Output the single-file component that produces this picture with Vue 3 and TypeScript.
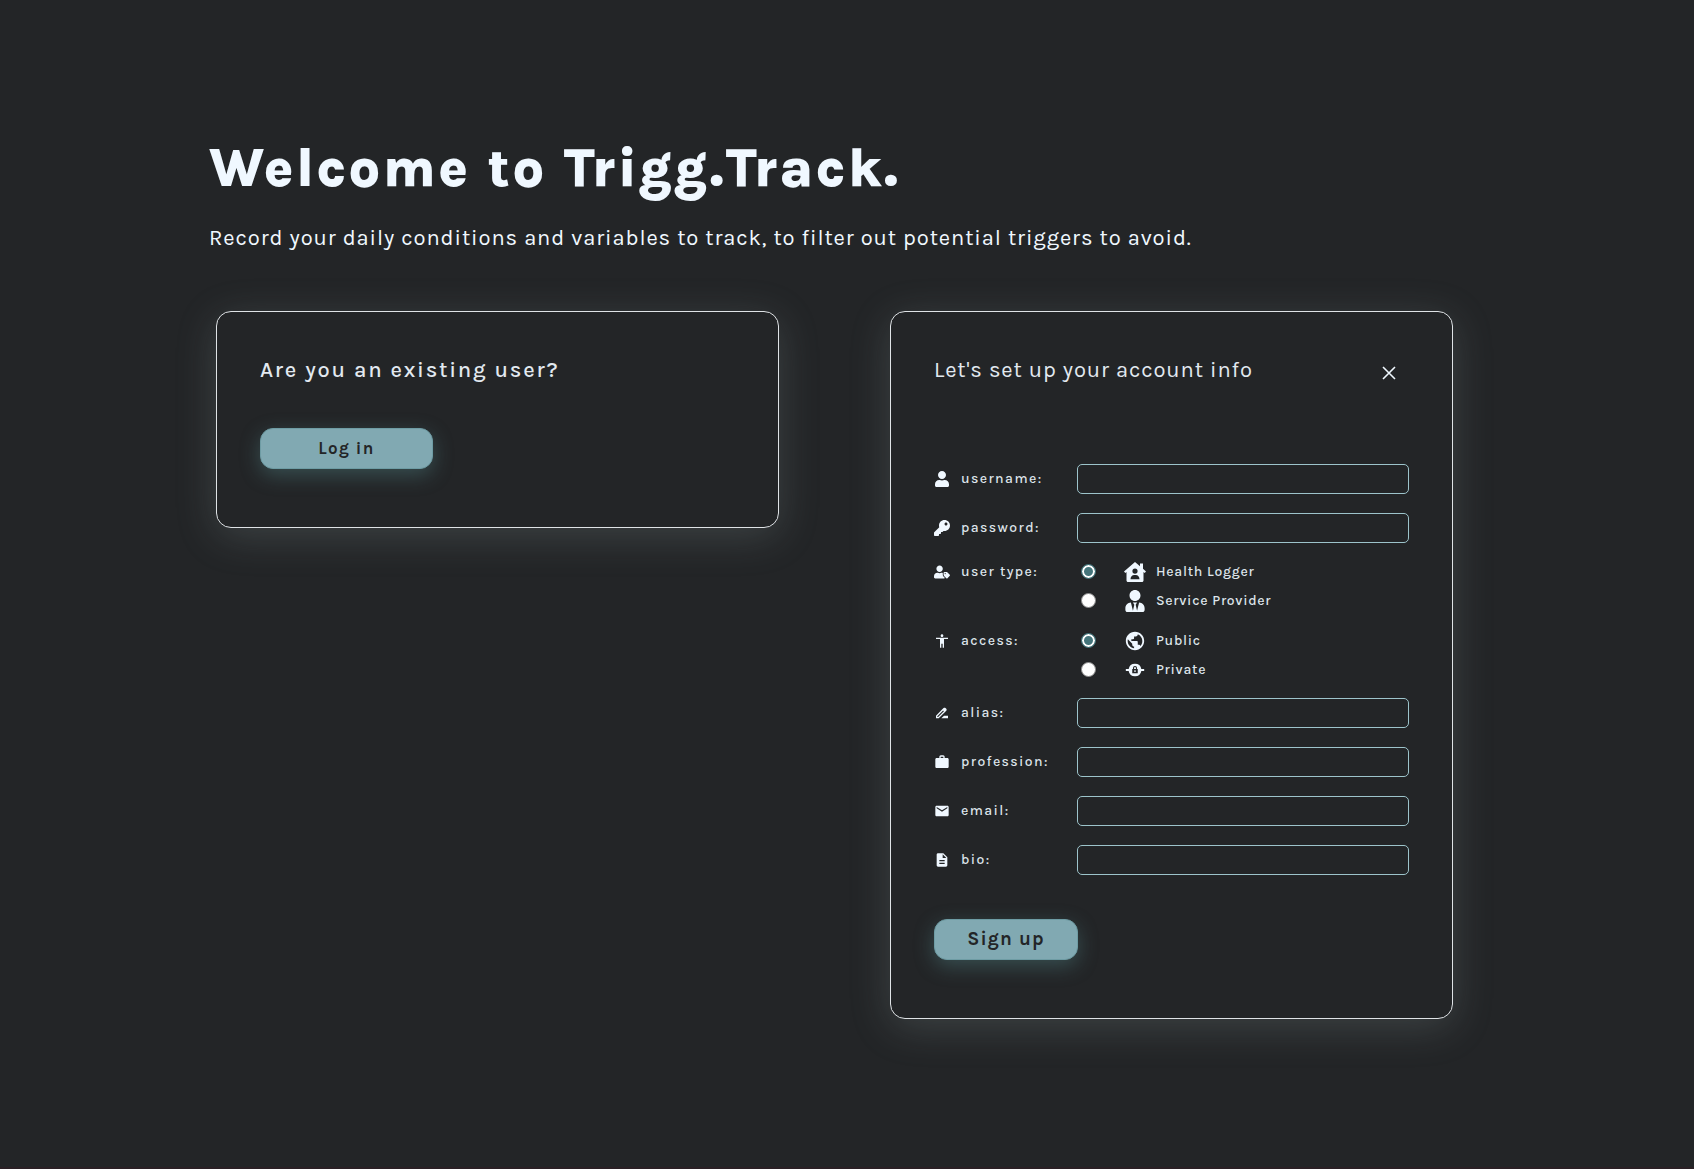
<script setup lang="ts">
import { ref } from 'vue'

interface Icon {
  box: string
  d: string
}

interface TextField {
  id: string
  label: string
  type: string
  icon: Icon
}

interface Choice {
  value: string
  label: string
  icon: Icon
}

interface ChoiceField {
  name: string
  label: string
  icon: Icon
  choices: Choice[]
}

const icons: Record<string, Icon> = {
  user: {
    box: '0 0 448 512',
    d: 'M224 256c70.7 0 128-57.3 128-128S294.7 0 224 0 96 57.3 96 128s57.3 128 128 128zm89.6 32h-16.7c-22.2 10.2-46.9 16-72.9 16s-50.6-5.8-72.9-16h-16.7C60.2 288 0 348.2 0 422.4V464c0 26.5 21.5 48 48 48h352c26.5 0 48-21.5 48-48v-41.6c0-74.2-60.2-134.4-134.4-134.4z',
  },
  key: {
    box: '0 0 512 512',
    d: 'M512 176.001C512 273.203 433.202 352 336 352c-11.22 0-22.19-1.062-32.827-3.069l-24.012 27.014A23.999 23.999 0 0 1 261.223 384H224v40c0 13.255-10.745 24-24 24h-40v40c0 13.255-10.745 24-24 24H24c-13.255 0-24-10.745-24-24v-78.059c0-6.365 2.529-12.47 7.029-16.971l161.802-161.802C163.108 213.814 160 195.271 160 176 160 78.798 238.797.001 335.999 0 433.488-.001 512 78.511 512 176.001zM336 128c0 26.51 21.49 48 48 48s48-21.49 48-48-21.49-48-48-48-48 21.49-48 48z',
  },
  userTag: {
    box: '0 0 640 512',
    d: 'M630.6 364.9l-90.3-90.2c-12-12-28.3-18.7-45.3-18.7h-79.3c-17.7 0-32 14.3-32 32v79.2c0 17 6.7 33.2 18.7 45.2l90.3 90.2c12.5 12.5 32.8 12.5 45.3 0l92.5-92.5c12.6-12.5 12.6-32.7.1-45.2zm-182.8-21c-13.3 0-24-10.7-24-24s10.7-24 24-24 24 10.7 24 24c0 13.2-10.7 24-24 24zm-223.8-88c70.7 0 128-57.3 128-128C352 57.3 294.7 0 224 0S96 57.3 96 128c0 70.6 57.3 127.9 128 127.9zm127.8 111.2V294c-12.2-3.6-24.9-6.2-38.2-6.2h-16.7c-22.2 10.2-46.9 16-72.9 16s-50.6-5.8-72.9-16h-16.7c-74.2 0-134.4 60.2-134.4 134.4V464c0 26.5 21.5 48 48 48h352c15.5 0 29.1-7.5 37.9-18.9l-58-58c-18.1-18.1-28.1-42.2-28.1-67.9z',
  },
  access: {
    box: '0 0 24 24',
    d: 'M12 2c1.1 0 2 .9 2 2s-.9 2-2 2-2-.9-2-2 .9-2 2-2zm9 7h-6v13h-2v-6h-2v6H9V9H3V7h18v2z',
  },
  pen: {
    box: '0 0 24 24',
    d: 'M18.41 5.8 17.2 4.59c-.78-.78-2.05-.78-2.83 0l-2.68 2.68L3 15.96V20h4.04l8.74-8.74 2.63-2.63c.79-.78.79-2.05 0-2.83zM6.21 18H5v-1.21l8.66-8.66 1.21 1.21L6.21 18zM11 20l4-4h6v4H11z',
  },
  briefcase: {
    box: '0 0 24 24',
    d: 'M20 6h-4V4.500C16 3.100 15.100 2 13.700 2h-3.400C8.900 2 8 3.100 8 4.500V6H4c-1.100 0-2 .9-2 2v11c0 1.100.9 2 2 2h16c1.100 0 2-.9 2-2V8c0-1.100-.9-2-2-2zm-6 0h-4V4h4v2z',
  },
  mail: {
    box: '0 0 24 24',
    d: 'M20 4H4c-1.1 0-1.99.9-1.99 2L2 18c0 1.1.9 2 2 2h16c1.1 0 2-.9 2-2V6c0-1.1-.9-2-2-2zm0 4l-8 5-8-5V6l8 5 8-5v2z',
  },
  doc: {
    box: '0 0 24 24',
    d: 'M14 2H6c-1.1 0-1.99.9-1.99 2L4 20c0 1.1.89 2 1.99 2H18c1.1 0 2-.9 2-2V8l-6-6zm2 16H8v-2h8v2zm0-4H8v-2h8v2zm-3-5V3.5L18.5 9H13z',
  },
  house: {
    box: '0 0 22 22',
    d: 'M11 1 0 10.400l1.300 1.500L2.500 11v8.500c0 .8.700 1.500 1.500 1.500h14c.8 0 1.500-.7 1.500-1.500V11l1.200.9 1.300-1.500-3-2.600V2.500h-3v2.700zM11 7.500a2.600 2.600 0 1 1 0 5.200 2.600 2.600 0 0 1 0-5.200zM6.500 18.200c0-2.500 1.600-4.200 3.700-4.200h1.600c2.100 0 3.700 1.700 3.700 4.200z',
  },
  tie: {
    box: '0 0 448 512',
    d: 'M224 256c70.7 0 128-57.3 128-128S294.7 0 224 0 96 57.3 96 128s57.3 128 128 128zm95.8 32.6L272 480l-32-136 32-56h-96l32 56-32 136-47.8-191.4C56.9 292 0 350.3 0 422.4V464c0 26.5 21.5 48 48 48h352c26.5 0 48-21.5 48-48v-41.6c0-72.1-56.9-130.4-128.2-133.8z',
  },
  globe: {
    box: '0 0 24 24',
    d: 'M12 2C6.48 2 2 6.48 2 12s4.48 10 10 10 10-4.48 10-10S17.52 2 12 2zm-1 17.93c-3.95-.49-7-3.85-7-7.93 0-.62.08-1.21.21-1.79L9 15v1c0 1.1.9 2 2 2v1.93zm6.9-2.54c-.26-.81-1-1.39-1.9-1.39h-1v-3c0-.55-.45-1-1-1H8v-2h2c.55 0 1-.45 1-1V7h2c1.1 0 2-.9 2-2v-.41c2.93 1.19 5 4.06 5 7.41 0 2.08-.8 3.97-2.1 5.39z',
  },
  lock: {
    box: '0 0 24 24',
    d: 'M2 11h3.100a7 7 0 0 1 13.800 0H22v2h-3.100a7 7 0 0 1-13.800 0H2zM9 11v4.500h6V11h-.8V9.800a2.200 2.200 0 0 0-4.400 0V11zM11 11V9.800a1 1 0 0 1 2 0V11zM11.300 12.300h1.400v2h-1.400z',
  },
}

const credentials: TextField[] = [
  { id: 'username', label: 'username:', type: 'text', icon: icons.user },
  { id: 'password', label: 'password:', type: 'password', icon: icons.key },
]

const choiceFields: ChoiceField[] = [
  {
    name: 'userType',
    label: 'user type:',
    icon: icons.userTag,
    choices: [
      { value: 'logger', label: 'Health Logger', icon: icons.house },
      { value: 'provider', label: 'Service Provider', icon: icons.tie },
    ],
  },
  {
    name: 'access',
    label: 'access:',
    icon: icons.access,
    choices: [
      { value: 'public', label: 'Public', icon: icons.globe },
      { value: 'private', label: 'Private', icon: icons.lock },
    ],
  },
]

const profile: TextField[] = [
  { id: 'alias', label: 'alias:', type: 'text', icon: icons.pen },
  { id: 'profession', label: 'profession:', type: 'text', icon: icons.briefcase },
  { id: 'email', label: 'email:', type: 'email', icon: icons.mail },
  { id: 'bio', label: 'bio:', type: 'text', icon: icons.doc },
]

const values = ref<Record<string, string>>({
  username: '',
  password: '',
  alias: '',
  profession: '',
  email: '',
  bio: '',
  userType: 'logger',
  access: 'public',
})
</script>

<template>
  <main class="page">
    <header>
      <h1 class="title">Welcome to Trigg.Track.</h1>
      <p class="lead">
        Record your daily conditions and variables to track, to filter out potential triggers to avoid.
      </p>
    </header>

    <div class="cards">
      <section class="card">
        <h2 class="heading wide">Are you an existing user?</h2>
        <button type="button" class="btn login">Log in</button>
      </section>

      <section class="card">
        <div class="card-head">
          <h2 class="heading">Let's set up your account info</h2>
          <button type="button" class="close" aria-label="Close">
            <svg viewBox="0 0 14 14" width="14" height="14">
              <path d="M1 1l12 12M13 1L1 13" fill="none" stroke="currentColor" stroke-width="1.6" />
            </svg>
          </button>
        </div>

        <form @submit.prevent>
          <div class="fields">
            <div v-for="f in credentials" :key="f.id" class="row">
              <label class="label" :for="f.id">
                <svg class="icon" :viewBox="f.icon.box"><path :d="f.icon.d" fill-rule="evenodd" /></svg>
                {{ f.label }}
              </label>
              <input :id="f.id" v-model="values[f.id]" class="input" :type="f.type" />
            </div>
          </div>

          <div class="groups">
            <div
              v-for="g in choiceFields"
              :key="g.name"
              class="row group"
              role="radiogroup"
              :aria-labelledby="g.name"
            >
              <span :id="g.name" class="label group-label">
                <svg class="icon" :viewBox="g.icon.box"><path :d="g.icon.d" fill-rule="evenodd" /></svg>
                {{ g.label }}
              </span>
              <div class="choices">
                <label v-for="c in g.choices" :key="c.value" class="choice">
                  <input v-model="values[g.name]" class="radio" type="radio" :name="g.name" :value="c.value" />
                  <svg class="choice-icon" :viewBox="c.icon.box">
                    <path :d="c.icon.d" fill-rule="evenodd" />
                  </svg>
                  {{ c.label }}
                </label>
              </div>
            </div>
          </div>

          <div class="fields">
            <div v-for="f in profile" :key="f.id" class="row">
              <label class="label" :for="f.id">
                <svg class="icon" :viewBox="f.icon.box"><path :d="f.icon.d" fill-rule="evenodd" /></svg>
                {{ f.label }}
              </label>
              <input :id="f.id" v-model="values[f.id]" class="input" :type="f.type" />
            </div>
          </div>

          <button type="submit" class="btn signup">Sign up</button>
        </form>
      </section>
    </div>
  </main>
</template>

<style>
body {
  background: #232527;
}
</style>

<style scoped>
.page {
  box-sizing: border-box;
  min-height: 100vh;
  padding: 138px 241px 40px 209px;
  border-bottom: 2px solid #2a2025;
  background: #232527;
  color: aliceblue;
  font-family: Karla, Inter, 'Liberation Sans', sans-serif;
}

.title {
  margin: 0;
  font-size: 55px;
  line-height: 60px;
  font-weight: 800;
  letter-spacing: 0.04em;
}

.lead {
  margin: 25px 0 0;
  font-size: 22px;
  line-height: 30px;
  letter-spacing: 0.04em;
}

.cards {
  display: grid;
  grid-template-columns: 1fr 1fr;
  align-items: start;
  gap: 111px;
  margin: 58px 0 0 7px;
}

.card {
  padding: 43px 43px 58px;
  border: 1px solid #dfe3e6;
  border-radius: 15px;
  box-shadow: 0 8px 40px rgba(155, 172, 172, 0.22);
}

.card-head {
  display: flex;
  justify-content: space-between;
  align-items: center;
  padding-right: 10px;
}

.heading {
  margin: 0;
  color: #e2e9f0;
  font-size: 22px;
  line-height: 30px;
  font-weight: 400;
  letter-spacing: 0.04em;
}

.heading.wide {
  font-weight: 500;
  letter-spacing: 0.08em;
}

.close {
  display: flex;
  margin-top: 6px;
  padding: 3px;
  border: 0;
  background: none;
  color: aliceblue;
  cursor: pointer;
}

.btn {
  display: block;
  height: 41px;
  padding: 0 0 2px;
  border: 1px solid #6e9ca4;
  border-radius: 13px;
  background: #81a9b2;
  box-shadow: 0 6px 20px rgba(95, 158, 160, 0.35);
  color: #232527;
  font-family: inherit;
  font-weight: 700;
  cursor: pointer;
}

.login {
  width: 173px;
  margin-top: 43px;
  font-size: 17px;
  letter-spacing: 0.08em;
}

.signup {
  width: 144px;
  margin-top: 44px;
  font-size: 19px;
  letter-spacing: 0.06em;
}

form {
  margin-top: 79px;
}

.fields {
  display: grid;
  gap: 19px;
}

.groups {
  display: grid;
  gap: 11px;
  margin: 14px 0;
}

.row {
  display: grid;
  grid-template-columns: 143px 1fr;
  align-items: center;
}

.group {
  align-items: start;
}

.label {
  display: flex;
  align-items: center;
  gap: 11px;
  color: #dfe6ec;
  font-size: 14px;
  line-height: 20px;
  font-weight: 500;
  letter-spacing: 0.1em;
}

.group-label {
  height: 29px;
}

.icon {
  width: 16px;
  height: 16px;
  fill: aliceblue;
}

.input {
  box-sizing: border-box;
  width: 100%;
  height: 30px;
  padding: 0 8px;
  border: 1px solid #9dc4cb;
  border-radius: 5px;
  outline: none;
  background: transparent;
  color: aliceblue;
  font: inherit;
  font-size: 14px;
}

.choice {
  display: flex;
  align-items: center;
  height: 29px;
  color: #dfe6ec;
  font-size: 14px;
  line-height: 20px;
  font-weight: 500;
  letter-spacing: 0.05em;
}

.radio {
  appearance: none;
  width: 15px;
  height: 15px;
  margin: 0 28px 0 4px;
  border: 1px solid #8a8a8a;
  border-radius: 50%;
  background: #fff;
}

.radio:checked {
  border-color: #45757b;
  background: #45757b;
  box-shadow: inset 0 0 0 2px #fff;
}

.choice-icon {
  width: 22px;
  height: 22px;
  margin-right: 10px;
  fill: aliceblue;
}
</style>
